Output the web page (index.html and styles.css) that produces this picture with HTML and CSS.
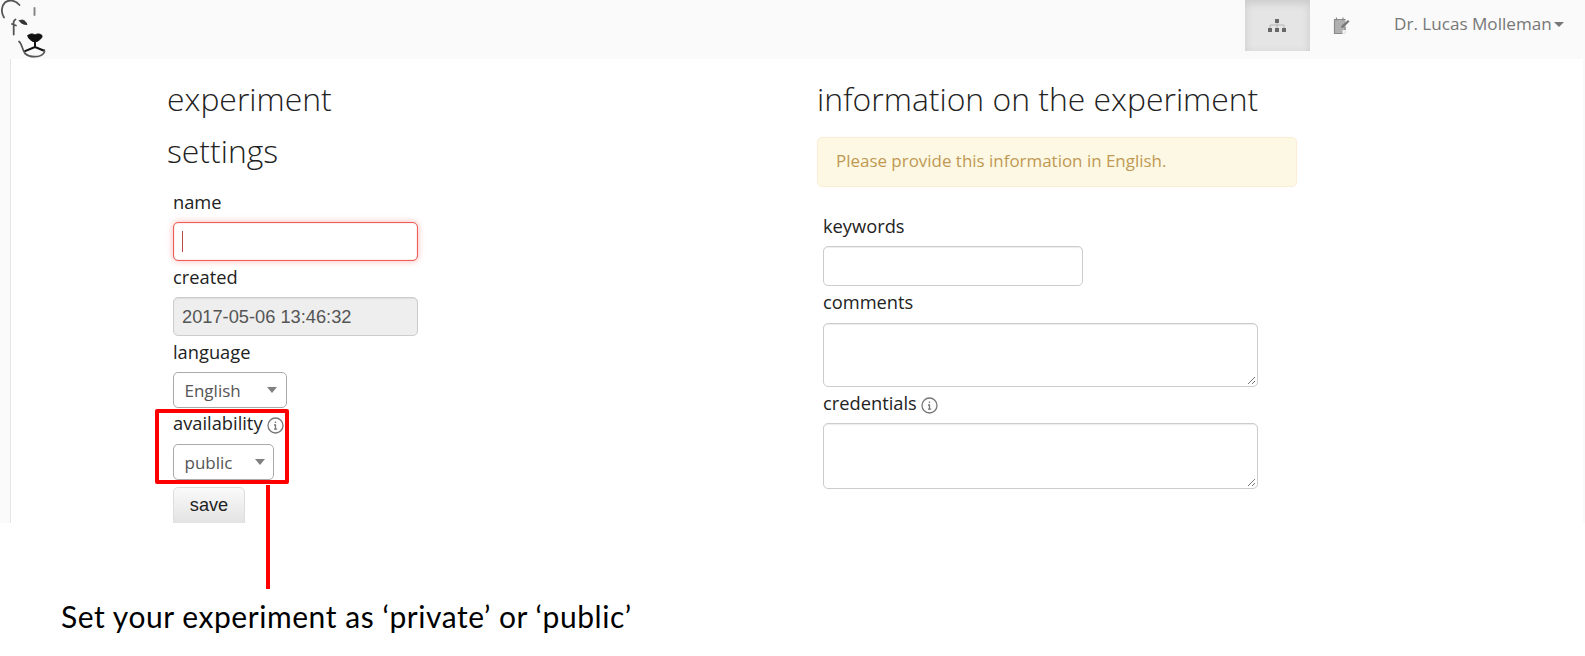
FILE: index.html
```html
<!DOCTYPE html>
<html lang="en">
<head>
<meta charset="utf-8">
<title>experiment settings</title>
<link rel="stylesheet" href="styles.css">
</head>
<body>
<div class="app">
  <header class="navbar">
    <svg class="logo" width="50" height="59" viewBox="0 0 50 59" fill="none" stroke="#333" stroke-linecap="round">
      <path d="M4 17.500C.8 12.500 1.200 6 5 2.500C9-.8 15 0 19.500 5" stroke="#555" stroke-width="1.800"/>
      <path d="M34.500 8v7" stroke="#888" stroke-width="2"/>
      <path d="M15.500 19.500c-2 1-2.300 3-1.800 6v9M12 24l4 1.500" stroke="#555" stroke-width="1.800"/>
      <path d="M19.500 20.800c2.500-1.500 5.500-1 7.500 3.700c-2 0-5.500-.3-7.500-3.700z" fill="#333" stroke-width="1"/>
      <path d="M28 35.500c2-2 5-2 7-.5c2-1.500 5-1.500 7 .5c.5 2.500-2.500 4.500-5 6h-4c-2.500-1.500-5.500-3.500-5-6z" fill="#111" stroke="#111" stroke-width="1"/>
      <path d="M35 41v6l-10 4.200M35 47l8.500 3.500" stroke="#111" stroke-width="2"/>
      <path d="M19 41.500c3 2 3 8 6 12c5 4.500 15 4 18.500 0c1-1 1.500-2 .8-3.500" stroke="#555" stroke-width="1.700"/>
    </svg>
    <nav class="nav">
      <span class="nav-item active">
        <svg width="20" height="16" viewBox="0 0 20 16">
          <path d="M10 5v5M3 10V7h14v3" fill="none" stroke="#b5b5b5"/>
          <path d="M8 1h4v4H8zM1 10h4v4H1zM8 10h4v4H8zM15 10h4v4h-4z" fill="#686868"/>
        </svg>
      </span>
      <span class="nav-item">
        <svg width="17" height="18" viewBox="0 0 17 18">
          <path d="M1 2h11.500v14.500H1z" fill="#b0b0b0"/>
          <path d="M1 2.500h11.500M3.500.5v3M10 .5v3M1.500 3v13.500h8M12 10v3" fill="none" stroke="#8a8a8a" stroke-width="1.200"/>
          <path d="M8 11l.8-2.500L15 3l1.500 1.500-6 6z" fill="#777"/>
          <path d="M9.500 13h3v3.500h-3z" fill="#f2f2f2"/>
        </svg>
      </span>
      <span class="user">Dr. Lucas Molleman<i class="caret"></i></span>
    </nav>
  </header>
  <main class="page">
    <section class="settings">
      <h1 class="title">experiment<br>settings</h1>
      <div class="fields">
        <label class="label label-name">name</label>
        <div class="input focused"><i class="cursor"></i></div>
        <label class="label label-created">created</label>
        <div class="input disabled">2017-05-06 13:46:32</div>
        <label class="label label-language">language</label>
        <div class="select language">English<i class="arrow"></i></div>
        <label class="label label-availability">availability<svg class="info" width="17" height="17" viewBox="0 0 17 17"><circle cx="8.500" cy="8.500" r="7.500"/><path d="M8.500 4.500v1.500M7 8h1.500v4M7 12.200h3.200"/></svg></label>
        <div class="select availability">public<i class="arrow"></i></div>
        <div class="button">save</div>
      </div>
    </section>
    <section class="information">
      <h1 class="title">information on the experiment</h1>
      <div class="alert">Please provide this information in English.</div>
      <div class="fields">
        <label class="label label-keywords">keywords</label>
        <div class="input keywords"></div>
        <label class="label label-comments">comments</label>
        <div class="textarea comments"><svg class="grip" width="9" height="9" viewBox="0 0 9 9"><path d="M1 8L8 1M5 8l3-3"/></svg></div>
        <label class="label label-credentials">credentials<svg class="info" width="17" height="17" viewBox="0 0 17 17"><circle cx="8.500" cy="8.500" r="7.500"/><path d="M8.500 4.500v1.500M7 8h1.500v4M7 12.200h3.200"/></svg></label>
        <div class="textarea credentials"><svg class="grip" width="9" height="9" viewBox="0 0 9 9"><path d="M1 8L8 1M5 8l3-3"/></svg></div>
      </div>
    </section>
  </main>
</div>
<p class="caption">Set your experiment as ‘private’ or ‘public’</p>
<div class="highlight"></div>
<div class="pointer"></div>
</body>
</html>
```

FILE: styles.css
```css
* { box-sizing: border-box; }
body {
  margin: 0;
  width: 1585px;
  height: 656px;
  overflow: hidden;
  position: relative;
  background: #fff;
  color: #222;
  font-family: "Open Sans", sans-serif;
}
.app {
  height: 523px;
  overflow: hidden;
  display: flex;
  flex-direction: column;
  background: #fafafa;
}
.navbar {
  height: 59px;
  flex: none;
  display: flex;
  justify-content: space-between;
  align-items: flex-start;
}
.logo { display: block; }
.nav { display: flex; height: 51px; padding-right: 21px; }
.nav-item {
  width: 64.5px;
  display: flex;
  align-items: center;
  justify-content: center;
}
.nav-item.active {
  background: #e5e5e5;
  box-shadow: inset 0 3px 8px rgba(0, 0, 0, .125);
}
.nav-item svg { display: block; }
.user {
  width: 190px;
  padding-left: 20px;
  display: flex;
  align-items: center;
  justify-content: space-between;
  font-size: 17.1px;
  line-height: 48px;
  height: 48px;
  color: #777;
  white-space: nowrap;
}
.caret {
  border: 5px solid transparent;
  border-top-color: #777;
  border-bottom: 0;
}
.page {
  flex: 1;
  display: flex;
  margin: 0 2px 0 10px;
  padding-top: 14px;
  border-left: 1px solid #e5e5e5;
  background: #fff;
}
.settings { flex: none; width: 806px; padding-left: 156px; }
.information { width: 480px; }
.title {
  margin: 0;
  font-size: 31.9px;
  font-weight: 300;
  line-height: 52px;
  white-space: nowrap;
}
.fields { padding-left: 6px; }
.label {
  display: flex;
  align-items: flex-start;
  font-size: 18.3px;
  line-height: 25px;
}
.label-name { height: 45px; padding-top: 12px; }
.label-created { height: 36px; padding-top: 3px; }
.label-language { height: 36px; padding-top: 3px; }
.label-availability { height: 36px; padding-top: 2px; }
.label-keywords { height: 59px; padding-top: 26px; }
.label-comments { height: 37px; padding-top: 3px; }
.label-credentials { height: 36px; padding-top: 3px; }
.info {
  margin: 7px 0 0 4px;
  fill: none;
  stroke: #777;
  stroke-width: 1.3;
}
.input, .textarea {
  border: 1px solid #ccc;
  border-radius: 5px;
  background: #fff;
  box-shadow: inset 0 1px 1px rgba(0, 0, 0, .075);
}
.input {
  width: 245px;
  height: 39px;
  padding: 0 8px;
  display: flex;
  align-items: center;
}
.focused {
  border-color: #ee5f5b;
  box-shadow: 0 0 7px #f8b9b7, inset 0 0 1px #ee5f5b;
}
.cursor { width: 1px; height: 21px; background: #b94a48; }
.disabled {
  background: #eee;
  color: #555;
  font: 18.25px "Liberation Sans", sans-serif;
}
.select {
  height: 36px;
  padding: 0 9px 0 10.5px;
  display: flex;
  align-items: center;
  justify-content: space-between;
  border: 1px solid #aaa;
  border-radius: 5px;
  color: #555;
  font-size: 17px;
}
.language { width: 114px; }
.availability { width: 101px; padding-right: 8px; }
.arrow {
  border: 5px solid transparent;
  border-top: 6px solid #808080;
  border-bottom: 0;
}
.button {
  width: 72px;
  height: 44px;
  margin-top: 7px;
  padding-top: 7px;
  text-align: center;
  border: 1px solid #ddd;
  border-radius: 5px;
  background: linear-gradient(#fafafa, #e2e2e2 36px);
  color: #222;
  font: 18.2px/21px "Liberation Sans", sans-serif;
}
.alert {
  height: 50px;
  margin-top: 12px;
  padding: 0 18px;
  border: 1px solid #fbeed5;
  border-radius: 5px;
  background: #fcf8e3;
  color: #c09853;
  font-size: 16.95px;
  line-height: 46px;
}
.keywords { width: 260px; height: 40px; }
.textarea {
  width: 435px;
  display: flex;
  align-items: flex-end;
  justify-content: flex-end;
  padding: 1px;
}
.comments { height: 64px; }
.credentials { height: 66px; }
.grip { fill: none; stroke: #777; stroke-width: 1; }
.caption {
  margin: 73px 0 0 61px;
  color: #000;
  font: 30px/40px Lato, sans-serif;
  letter-spacing: .55px;
  white-space: nowrap;
}
.highlight {
  position: absolute;
  left: 155px;
  top: 409px;
  width: 134px;
  height: 75px;
  border: 4px solid #f00;
  border-radius: 2px;
}
.pointer {
  position: absolute;
  left: 266px;
  top: 485px;
  width: 4px;
  height: 104px;
  background: #f00;
}
```
